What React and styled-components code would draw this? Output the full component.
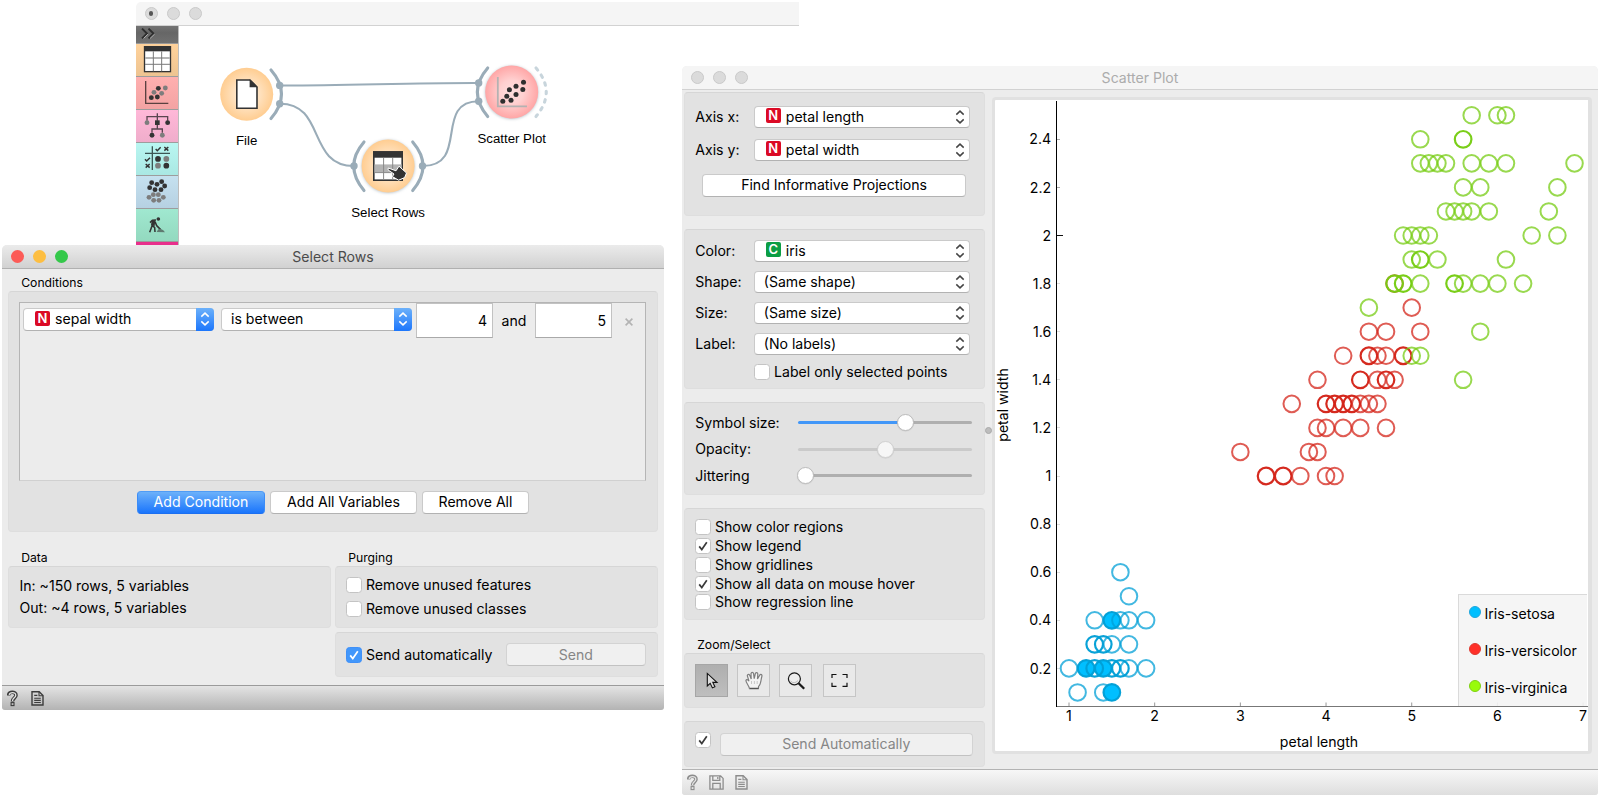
import React from "react";
import styled, { createGlobalStyle, css } from "styled-components";

const GlobalStyle = createGlobalStyle`
  *, *::before, *::after { box-sizing: border-box; }
  body {
    margin: 0;
    background: #fff;
    overflow: hidden;
    font-family: Inter, "Liberation Sans", sans-serif;
    font-size: 14.08px;
    line-height: 18px;
    color: #000;
  }
  svg { display: block; }
`;

const Desktop = styled.div`
  position: relative;
  width: 1600px;
  height: 797px;
  overflow: hidden;
`;

/* ---------- windows ---------- */

const Window = styled.section`
  position: absolute;
  display: flex;
  flex-direction: column;
  overflow: hidden;
  background: #ececec;
`;

const CanvasWindow = styled(Window)`
  left: 136px;
  top: 2px;
  width: 663px;
  height: 243px;
  background: #fff;
  border-radius: 5px 0 0 0;
`;

const SelectRowsWindow = styled(Window)`
  left: 2px;
  top: 245px;
  width: 662px;
  height: 465px;
  border-radius: 5px 5px 3px 3px;
`;

const ScatterWindow = styled(Window)`
  left: 682px;
  top: 66px;
  width: 916px;
  height: 729px;
  border-radius: 5px 5px 3px 3px;
`;

const TitleBar = styled.header`
  flex: none;
  display: grid;
  grid-template-columns: 1fr auto 1fr;
  align-items: center;
  height: 24px;
  padding: 0 8.5px;
  color: ${(p) => (p.$active ? "#4b4b4b" : "#acacac")};
  background: ${(p) => (p.$active ? "linear-gradient(#ebebeb, #d1d1d1)" : "#f5f5f5")};
  border-bottom: 1px solid ${(p) => (p.$active ? "#b0b0b0" : "#d2d2d2")};
`;

const Lights = styled.div`
  display: flex;
  gap: 9px;
`;

const Light = styled.i`
  display: grid;
  place-items: center;
  width: 13.2px;
  height: 13.2px;
  border-radius: 50%;
  background: ${(p) => p.$color || "#dbdbdb"};
  border: ${(p) => (p.$color ? "none" : "1px solid #c9c9c9")};
  &::after {
    content: "";
    width: 4.5px;
    height: 4.5px;
    border-radius: 50%;
    background: ${(p) => (p.$dot ? "#555" : "transparent")};
  }
`;

const Title = styled.h1`
  margin: 0;
  font-size: 14.08px;
  font-weight: 400;
  line-height: 18px;
`;

const StatusBar = styled.footer`
  flex: none;
  display: flex;
  align-items: center;
  gap: ${(p) => (p.$active ? "12.5px" : "11px")};
  height: ${(p) => (p.$active ? "25px" : "26px")};
  padding-left: 5px;
  border-top: 1px solid ${(p) => (p.$active ? "#9b9b9b" : "#b3b3b3")};
  background: ${(p) =>
    p.$active ? "linear-gradient(#e4e4e4, #b3b3b3)" : "linear-gradient(#f7f7f7, #dedede)"};
  color: ${(p) => (p.$active ? "#3c3c3c" : "#8c8c8c")};
`;

/* ---------- shared controls ---------- */

const Panel = styled.div`
  background: #e2e2e2;
  border: 1px solid #dedede;
  border-top-color: #d6d6d6;
  border-radius: 4px;
`;

const GroupTitle = styled.h2`
  display: flex;
  align-items: flex-end;
  margin: 0;
  padding-left: 13.2px;
  font-size: 12.2px;
  font-weight: 400;
  line-height: 16px;
`;

const controlFrame = css`
  background: #fff;
  border: 1px solid #cacaca;
  border-bottom-color: #b2b2b2;
  border-radius: 4px;
`;

const ComboBox = styled.div`
  ${controlFrame}
  display: flex;
  align-items: center;
  width: ${(p) => p.$width}px;
  height: ${(p) => p.$height || 22.5}px;
  padding-left: ${(p) => (p.$tagged ? 11 : 9)}px;
  padding-bottom: 0.5px;
  margin-bottom: ${(p) => (p.$blue ? "2px" : 0)};
  white-space: nowrap;
`;

const Tag = styled.b`
  display: grid;
  place-items: center;
  width: 15px;
  height: 15px;
  margin: -2px 5px 0 0;
  border-radius: 2px;
  background: ${(p) => (p.$kind === "N" ? "#db0a25" : "#0b9d44")};
  color: #fff;
  font-size: 13px;
  font-weight: 600;
  line-height: 15px;
`;

const Stepper = styled.span`
  display: grid;
  place-items: center;
  margin-left: auto;
  margin-right: ${(p) => (p.$blue ? "-1px" : 0)};
  width: 18px;
  height: 22.5px;
  border-radius: 0 4px 4px 0;
  color: ${(p) => (p.$blue ? "#fff" : "#444")};
  background: ${(p) => (p.$blue ? "linear-gradient(#6cb1fa, #1c76fc)" : "none")};
`;

const Button = styled.button`
  ${controlFrame}
  width: ${(p) => p.$width}px;
  height: 22.5px;
  padding: 0;
  font: inherit;
  line-height: 20px;
  color: ${(p) => (p.disabled ? "#868686" : "#000")};
  ${(p) =>
    p.$primary &&
    css`
      color: #fff;
      border-color: #4f9cf6 #3b8cf7 #1c6ff0;
      background: linear-gradient(#6cb1fa, #1a75fc);
    `}
  ${(p) =>
    p.disabled &&
    css`
      background: #f0f0f0;
      border-color: #d3d3d3 #d3d3d3 #c2c2c2;
    `}
`;

const CheckRow = styled.label`
  display: flex;
  align-items: center;
  gap: 4px;
  height: ${(p) => p.$height}px;
  white-space: nowrap;
`;

const Box = styled.span`
  flex: none;
  width: 16px;
  height: 16px;
  border-radius: 3.5px;
  border: 1px solid ${(p) => (p.$blue ? "#3f90f8" : "#c4c4c4")};
  background: ${(p) => (p.$blue ? "#4297fb" : "#fff")};
  color: ${(p) => (p.$blue ? "#fff" : "#3a3a3a")};
`;

function CheckBox({ checked, blue }) {
  return (
    <Box $blue={blue}>
      {checked && (
        <svg width="14" height="14" viewBox="0 0 14 14" fill="none" stroke="currentColor" strokeWidth="1.7">
          <path d="M3.2 7.4 L5.8 10.6 L10.8 3.2" />
        </svg>
      )}
    </Box>
  );
}

function Combo({ width, height, tag, blue, children }) {
  return (
    <ComboBox $width={width} $height={height} $tagged={!!tag} $blue={blue}>
      {tag && <Tag $kind={tag}>{tag}</Tag>}
      {children}
      <Stepper $blue={blue}>
        <svg width="10" height="14" viewBox="0 0 10 14" fill="none" stroke="currentColor" strokeWidth="1.5">
          <path d="M1.3 4.6 L5 1.1 L8.7 4.6 M1.3 9.4 L5 12.9 L8.7 9.4" />
        </svg>
      </Stepper>
    </ComboBox>
  );
}

/* ---------- status icons ---------- */

const HelpIcon = () => (
  <svg width="11" height="17" viewBox="0 0 11 17" fill="none">
    <path d="M1.6 5.4 C1.6 1.2 9 1.2 9 5.2 C9 8 5.5 8 5.5 11.6" stroke="currentColor" strokeWidth="3.6" />
    <path d="M2.2 4.9 C2.6 2 8.8 1.6 8.8 5.2 C8.8 7.8 5.5 7.8 5.5 11" stroke="#e2e2e2" strokeWidth="1.3" />
    <rect x="4.1" y="12.6" width="2.9" height="3" stroke="currentColor" strokeWidth="1.1" />
  </svg>
);

const ReportIcon = () => (
  <svg width="13" height="15" viewBox="0 0 13 15" fill="none" stroke="currentColor">
    <path d="M1 .8 H8.2 L12 4.6 V14 H1 Z" strokeWidth="1.4" />
    <path d="M8 1 V4.8 H12 M3.2 4.4 H6.4 M3.2 7.3 H9.8 M3.2 9.4 H9.8 M3.2 11.5 H9.8" strokeWidth="1.1" />
  </svg>
);

const SaveIcon = () => (
  <svg width="15" height="15" viewBox="0 0 15 15" fill="none" stroke="currentColor" strokeWidth="1.3">
    <path d="M.9 .9 H11.6 L14.1 3.4 V14.1 H.9 Z M3.8 .9 V5.4 H10.8 V.9 M3.8 14 V8.4 H11.2 V14 M8.8 2 V4" />
  </svg>
);

/* ---------- canvas window ---------- */

const CanvasBody = styled.div`
  display: flex;
  flex: 1;
`;

const ToolBox = styled.nav`
  display: flex;
  flex-direction: column;
  width: 43px;
  margin-right: 1px;
  border-right: 1px solid #bdbdbd;
`;

const ToolBoxToggle = styled.div`
  height: 18px;
  padding: 2px 0 0 4.5px;
  background: linear-gradient(#737373, #666 40%, #707070);
  border-bottom: 1px solid #999;
`;

const Category = styled.div`
  height: 33px;
  border-bottom: 1px solid #9d9d9d;
  background: ${(p) => `linear-gradient(${p.$from}, ${p.$to})`};
`;

const CategoryEdge = styled.div`
  height: 3px;
  background: #e8308c;
`;

const K = "#333";
const G = "#7d7d7d";
const Dots = ({ list, r = 7.3, fill }) =>
  list.map(([x, y]) => <circle key={`${x}-${y}`} cx={x} cy={y} r={r} fill={fill} />);

const categories = [
  {
    from: "#ffd29b",
    to: "#eec491",
    icon: (
      <>
        <rect x="25.5" y="8" width="78" height="75" fill="#fff" stroke={K} strokeWidth="4" />
        <rect x="24" y="6" width="81" height="16" fill={K} />
        <path d="M27 42 H102" stroke="#b5b5b5" strokeWidth="6" />
        <path d="M27 61 H102 M52 22 V82 M77 22 V82" stroke="#777" strokeWidth="3" />
      </>
    ),
  },
  {
    from: "#ffb0b0",
    to: "#f3a3a3",
    icon: (
      <>
        <path d="M29 12 V79 H97" fill="none" stroke="#5a4140" strokeWidth="4" />
        <Dots fill={K} list={[[46, 62], [64, 60], [67, 34]]} />
        <Dots fill={G} list={[[54, 46], [77, 49], [88, 33]]} />
      </>
    ),
  },
  {
    from: "#ffb8d8",
    to: "#f0adcb",
    icon: (
      <>
        <path d="M33 32 V20 H95 V32 M64 10 V32 M48 68 V57 H79 V68 M64 44 V57" fill="none" stroke="#5a4550" strokeWidth="4" />
        <rect x="57" y="31" width="14" height="14" fill={K} />
        <Dots fill={K} list={[[95, 38], [48, 76]]} />
        <Dots fill={G} list={[[33, 38], [79, 76]]} />
      </>
    ),
  },
  {
    from: "#b9f6f1",
    to: "#a9e8e3",
    icon: (
      <>
        <path d="M49 10 V81 M27 31 H102" stroke="#3c5654" strokeWidth="4" />
        <path
          d="M59 18 L64 23 L74 13 M27 49 L32 54 L42 44 M85 12 L97 23 M97 12 L85 23 M29 63 L41 74 M41 63 L29 74"
          fill="none"
          stroke={K}
          strokeWidth="4.4"
        />
        <Dots r={8.6} fill={K} list={[[66, 48], [91, 68]]} />
        <Dots r={8.6} fill={G} list={[[91, 48], [66, 68]]} />
      </>
    ),
  },
  {
    from: "#c5e1ef",
    to: "#b6d1e2",
    icon: (
      <>
        <Dots fill={G} list={[[52, 56], [67, 56], [39, 64], [82, 64], [53, 73], [69, 73]]} />
        <Dots fill={K} list={[[47, 20], [63, 25], [77, 17], [86, 30], [41, 35], [57, 41], [75, 41]]} />
      </>
    ),
  },
  {
    from: "#a0e8d0",
    to: "#93d9bf",
    icon: (
      <g transform="translate(0 -4)">
        <circle cx="67" cy="34" r="5.5" fill={K} />
        <path
          d="M60 37 L49 38 L42 45 M52 40 L49 53 L56 60 L57 73 M49 53 L45 63 L41 74 M57 42 L62 54 L74 66"
          fill="none"
          stroke={K}
          strokeWidth="4.6"
          strokeLinejoin="round"
        />
        <path d="M58 38 L47 39 L45 53 L56 55 Z" fill={K} />
        <path d="M62 73 Q67 60 75 64 Q83 66 87 74 Z" fill="#5f7a70" />
      </g>
    ),
  },
];

const nodes = [
  { x: 246.7, y: 94.3, label: "File", ly: 144.7, fill: "url(#orange)" },
  { x: 388.1, y: 166, label: "Select Rows", ly: 216.6, fill: "url(#orange)", shadow: true },
  { x: 511.7, y: 92, label: "Scatter Plot", ly: 142.7, fill: "url(#red)", shadow: true },
];

function Workflow() {
  return (
    <svg width="619" height="219" viewBox="180 26 619 219" fill="none">
      <defs>
        <radialGradient id="orange">
          <stop offset="0" stopColor="#fff0de" />
          <stop offset=".45" stopColor="#ffe3c2" />
          <stop offset="1" stopColor="#ffcd91" />
        </radialGradient>
        <radialGradient id="red">
          <stop offset="0" stopColor="#ffdede" />
          <stop offset=".45" stopColor="#ffd0d0" />
          <stop offset="1" stopColor="#ffa6a6" />
        </radialGradient>
        <filter id="soft" x="-30%" y="-30%" width="160%" height="160%">
          <feGaussianBlur stdDeviation="1.8" />
        </filter>
      </defs>
      {nodes.map((n) => (
        <g key={n.label}>
          {n.shadow && <circle cx={n.x} cy={n.y + 0.5} r="26.6" fill="#b9c3ca" filter="url(#soft)" />}
          <circle cx={n.x} cy={n.y} r="26.5" fill={n.fill} />
          <text
            x={n.x}
            y={n.ly}
            textAnchor="middle"
            fill="#000"
            fontFamily="'Liberation Sans', Arial, sans-serif"
            fontSize="13.25"
          >
            {n.label}
          </text>
        </g>
      ))}
      <g stroke="#9aacb8" strokeWidth="2.1">
        <path d="M280 85.5 C345 85.7 410 82.8 479 83" />
        <path d="M280 103.7 C326 103.7 307 166 354 166" />
        <path d="M422.5 166 C470 166 433 101.3 479 101.3" />
      </g>
      <g stroke="#9aacb8" strokeWidth="3.1" strokeLinecap="round">
        <path d="M271 70 Q292 94 271 118.6" />
        <path d="M487.7 68 Q467 92 487.7 116.5" />
        <path d="M364 142 Q343.5 166 364 190.5" />
        <path d="M412.7 142 Q433.3 166 412.7 190.5" />
        <path d="M536 68 Q556.5 92 536 116.5" stroke="#c8d5dc" strokeDasharray="2.6 6" />
      </g>
      <g fill="#9aacb8">
        <circle cx="279.7" cy="85.4" r="3.7" />
        <circle cx="279.7" cy="103.7" r="3.7" />
        <circle cx="478.7" cy="83" r="3.7" />
        <circle cx="478.7" cy="101.3" r="3.7" />
        <circle cx="354" cy="166" r="3.7" />
        <circle cx="422.5" cy="166" r="3.7" />
      </g>
      <path d="M236.8 80 H250 L257 87 V108.3 H236.8 Z" fill="#fff" stroke="#333" strokeWidth="1.6" />
      <path d="M249.6 79.3 L257.6 87.3 H249.6 Z" fill="#333" />
      <path d="M497.8 77 V106.3 H527" stroke="#b4b2b2" strokeWidth="1.8" />
      <Dots
        fill="#2f2f2f"
        r={2.5}
        list={[[502.8, 101.3], [511, 100.3], [506.8, 96.3], [516, 94.5], [509.4, 89.7], [516, 86.3], [522.8, 89.5], [523.5, 82.2]]}
      />
      <rect x="373.8" y="152" width="28.4" height="28.2" fill="#fff" stroke="#333" strokeWidth="1.6" />
      <rect x="373" y="151.2" width="30" height="6.5" fill="#333" />
      <rect x="374.6" y="164.4" width="27" height="7.8" fill="#b3b3b3" />
      <path d="M383.6 158 V180 M392.7 158 V180 M374 172.6 H402" stroke="#888" strokeWidth="1" />
      <path
        d="M388.3 168 L396 170.8 L399 166.2 L406.5 173 L404.6 177.6 L398.6 180.2 L392.4 176.6 L394 174 L388 169.9 Z"
        fill="#333"
        stroke="#fff"
        strokeWidth="1"
      />
    </svg>
  );
}

function OrangeCanvas() {
  return (
    <CanvasWindow>
      <TitleBar>
        <Lights>
          <Light $dot />
          <Light />
          <Light />
        </Lights>
      </TitleBar>
      <CanvasBody>
        <ToolBox>
          <ToolBoxToggle>
            <svg width="15" height="11" viewBox="0 0 15 11" fill="none" stroke="#2e2e2e" strokeWidth="1.9">
              <path d="M1 .6 L6 5.5 L1 10.4" />
              <path d="M7.5 .6 L12.5 5.5 L7.5 10.4" />
              <path d="M2.6 10.4 L7.2 6 M9.1 10.4 L13.7 6" stroke="#b5b5b5" strokeWidth="1" />
            </svg>
          </ToolBoxToggle>
          {categories.map((c) => (
            <Category key={c.from} $from={c.from} $to={c.to}>
              <svg width="42" height="32.3" viewBox="0 0 126 97">
                {c.icon}
              </svg>
            </Category>
          ))}
          <CategoryEdge />
        </ToolBox>
        <Workflow />
      </CanvasBody>
    </CanvasWindow>
  );
}

/* ---------- select rows window ---------- */

const SelectRowsBody = styled.div`
  flex: 1;
  padding: 0 6px;
`;

const ConditionsTitle = styled(GroupTitle)`
  height: 22px;
`;

const LowerTitle = styled(GroupTitle)`
  height: 34px;
`;

const ConditionsPanel = styled(Panel)`
  height: 241px;
  padding: 10px 11px 10px 10px;
`;

const ConditionList = styled.div`
  height: 179px;
  background: #ececec;
  border: 1px solid #b5b5b5;
  border-bottom-color: #d0d0d0;
`;

const ConditionRow = styled.div`
  display: flex;
  align-items: center;
  height: 35px;
  padding-left: 3px;
`;

const Gap = styled.span`
  width: ${(p) => p.$size}px;
`;

const NumberField = styled.div`
  width: 77px;
  height: 35px;
  padding: 8px 5px 0 0;
  text-align: right;
  line-height: 18px;
  background: #fff;
  border: 1px solid #c2c2c2;
  border-bottom-color: #a9a9a9;
`;

const Conjunction = styled.span`
  width: 42px;
  padding-top: 1px;
  text-align: center;
`;

const RemoveMark = styled.svg`
  margin: 3px 0 0 12.5px;
`;

const ConditionButtons = styled.div`
  display: flex;
  gap: 5.3px;
  padding: 10px 0 0 118px;
`;

const LowerColumns = styled.div`
  display: grid;
  grid-template-columns: 323px 323px;
  gap: 4px;
`;

const DataPanel = styled(Panel)`
  height: 62px;
  padding: 8px 0 0 10.5px;
  line-height: 22px;
`;

const PurgePanel = styled(Panel)`
  height: 62px;
  padding: 6px 0 0 10px;
`;

const SendPanel = styled(Panel)`
  display: flex;
  align-items: center;
  justify-content: space-between;
  height: 45px;
  margin-top: 4px;
  padding: 0 11px 0 10px;
`;

function SelectRows() {
  return (
    <SelectRowsWindow>
      <TitleBar $active>
        <Lights>
          <Light $color="#fc5b57" />
          <Light $color="#fdbe41" />
          <Light $color="#34c84a" />
        </Lights>
        <Title>Select Rows</Title>
      </TitleBar>
      <SelectRowsBody>
        <ConditionsTitle>Conditions</ConditionsTitle>
        <ConditionsPanel>
          <ConditionList>
            <ConditionRow>
              <Combo width={191} tag="N" blue>
                sepal width
              </Combo>
              <Gap $size={7} />
              <Combo width={191} blue>
                is between
              </Combo>
              <Gap $size={4} />
              <NumberField>4</NumberField>
              <Conjunction>and</Conjunction>
              <NumberField>5</NumberField>
              <RemoveMark width="8" height="8" viewBox="0 0 8 8" stroke="#b3b3b3" strokeWidth="1.6">
                <path d="M.6 .6 L7.4 7.4 M7.4 .6 L.6 7.4" />
              </RemoveMark>
            </ConditionRow>
          </ConditionList>
          <ConditionButtons>
            <Button $width={128} $primary>
              Add Condition
            </Button>
            <Button $width={146.4}>Add All Variables</Button>
            <Button $width={107}>Remove All</Button>
          </ConditionButtons>
        </ConditionsPanel>
        <LowerColumns>
          <div>
            <LowerTitle>Data</LowerTitle>
            <DataPanel>
              <div>In: ~150 rows, 5 variables</div>
              <div>Out: ~4 rows, 5 variables</div>
            </DataPanel>
          </div>
          <div>
            <LowerTitle>Purging</LowerTitle>
            <PurgePanel>
              <CheckRow $height={24.3}>
                <CheckBox />
                Remove unused features
              </CheckRow>
              <CheckRow $height={24.3}>
                <CheckBox />
                Remove unused classes
              </CheckRow>
            </PurgePanel>
            <SendPanel>
              <CheckRow $height={24}>
                <CheckBox checked blue />
                Send automatically
              </CheckRow>
              <Button $width={140.5} disabled>
                Send
              </Button>
            </SendPanel>
          </div>
        </LowerColumns>
      </SelectRowsBody>
      <StatusBar $active>
        <HelpIcon />
        <ReportIcon />
      </StatusBar>
    </SelectRowsWindow>
  );
}

/* ---------- scatter plot window ---------- */

const ScatterBody = styled.div`
  flex: 1;
  display: flex;
  padding: 2px 6px 0 2px;
`;

const Controls = styled.aside`
  width: 300.5px;
`;

const AxisPanel = styled(Panel)`
  display: flex;
  flex-direction: column;
  gap: 10.5px;
  height: 123.5px;
  padding: 12.5px 0 0 10.3px;
`;

const ProjectionButton = styled(Button)`
  margin: 2.7px 0 0 6.5px;
`;

const StylePanel = styled(Panel)`
  display: flex;
  flex-direction: column;
  gap: 9px;
  height: 159.5px;
  margin-top: 13.5px;
  padding: 10px 0 0 10.3px;
`;

const Field = styled.div`
  display: grid;
  grid-template-columns: 58.5px 1fr;
  align-items: center;
`;

const LabelOnly = styled.div`
  margin: -2.5px 0 0 58.8px;
`;

const SliderPanel = styled(Panel)`
  height: 93px;
  margin-top: 13.5px;
  padding: 6.5px 0 0 10.3px;
`;

const SliderRow = styled.div`
  display: grid;
  grid-template-columns: 102.5px 174px;
  align-items: center;
  height: 26.5px;
`;

const Track = styled.div`
  height: 3px;
  border-radius: 2px;
  background: ${(p) => {
    const rest = p.$faded ? "#cacaca" : "#afafaf";
    return p.$filled
      ? `linear-gradient(to right, #4297f8 ${p.$at}px, ${rest} ${p.$at}px)`
      : rest;
  }};
`;

const Knob = styled.div`
  width: 17px;
  height: 17px;
  margin: -7px 0 0 ${(p) => p.$at - 8.7}px;
  border-radius: 50%;
  background: ${(p) => (p.$faded ? "#f6f6f6" : "#fff")};
  border: 1px solid ${(p) => (p.$faded ? "#d2d2d2" : "#bcbcbc")};
  box-shadow: 0 0.5px 1px rgba(0, 0, 0, 0.12);
`;

const OptionsPanel = styled(Panel)`
  height: 112px;
  margin-top: 13px;
  padding: 9px 0 0 10px;
`;

const ZoomTitle = styled(GroupTitle)`
  height: 33px;
`;

const ZoomPanel = styled(Panel)`
  display: flex;
  gap: 9px;
  height: 55px;
  padding: 10px 0 0 10px;
`;

const ToolButton = styled.div`
  display: grid;
  place-items: center;
  width: 33px;
  height: 33px;
  margin-left: ${(p) => (p.$apart ? "2px" : 0)};
  border: 1px solid ${(p) => (p.$pressed ? "#a6a6a6" : "#c5c5c5")};
  background: ${(p) => (p.$pressed ? "linear-gradient(#afafaf, #bebebe)" : "#e9e9e9")};
`;

const AutoPanel = styled(Panel)`
  display: flex;
  gap: 9px;
  height: 45.5px;
  margin-top: 13px;
  padding: 10px 0 0 10px;
`;

const AutoButton = styled(Button)`
  margin-top: 1px;
`;

const Splitter = styled.div`
  display: flex;
  align-items: center;
  justify-content: center;
  width: 7.5px;
  height: 676px;
  &::after {
    content: "";
    width: 7px;
    height: 7px;
    border-radius: 50%;
    background: #bdbdbd;
    border: 1px solid #a9a9a9;
  }
`;

const PlotFrame = styled.main`
  position: relative;
  flex: 1;
  height: 657px;
  margin-top: 5px;
  border: solid #e1e1e1;
  border-width: 3px 4px 3px 3px;
  border-radius: 4px;
  background: #fff;
`;

const Legend = styled.ul`
  position: absolute;
  right: 1px;
  bottom: 45px;
  display: flex;
  flex-direction: column;
  width: 129px;
  height: 112px;
  margin: 0;
  padding: 0 0 0 9.5px;
  list-style: none;
  background: rgba(244, 244, 244, 0.9);
  border-left: 1px solid #dadada;
  border-top: 1px solid #dadada;
`;

const LegendItem = styled.li`
  display: flex;
  align-items: center;
  gap: 4px;
  height: 37.4px;
`;

const Swatch = styled.i`
  width: 12px;
  height: 12px;
  margin-top: -4px;
  border-radius: 50%;
  background: ${(p) => p.$fill};
  border: 1px solid ${(p) => p.$edge};
`;

/* Petal width -> list of [petal length, number of samples, selected] */
const series = [
  {
    name: "Iris-setosa",
    stroke: "#009fd6",
    fill: "#00bfff",
    edge: "#20a6dc",
    rows: {
      0.6: [[1.6, 1]],
      0.5: [[1.7, 1]],
      0.4: [[1.3, 1], [1.5, 3, true], [1.6, 1], [1.7, 1], [1.9, 1]],
      0.3: [[1.3, 2], [1.4, 3], [1.5, 1], [1.7, 1]],
      0.2: [[1.0, 1], [1.5, 7], [1.2, 2, true], [1.4, 8, true], [1.3, 4], [1.6, 3], [1.7, 1], [1.9, 1]],
      0.1: [[1.1, 1], [1.4, 1], [1.5, 3, true]],
    },
  },
  {
    name: "Iris-versicolor",
    stroke: "#d42318",
    fill: "#ff3029",
    edge: "#dd3a30",
    rows: {
      1.8: [[4.8, 1]],
      1.7: [[5.0, 1]],
      1.6: [[4.5, 1], [4.7, 1], [5.1, 1]],
      1.5: [[4.2, 1], [4.5, 4], [4.6, 1], [4.7, 1], [4.9, 2]],
      1.4: [[3.9, 1], [4.4, 2], [4.6, 1], [4.7, 2], [4.8, 1]],
      1.3: [[3.6, 1], [4.0, 4], [4.1, 2], [4.2, 3], [4.3, 2], [4.4, 1], [4.5, 1], [4.6, 1]],
      1.2: [[3.9, 1], [4.0, 1], [4.2, 1], [4.4, 1], [4.7, 1]],
      1.1: [[3.0, 1], [3.8, 1], [3.9, 1]],
      "1.0": [[3.3, 2], [3.5, 2], [3.7, 1], [4.0, 1], [4.1, 1]],
    },
  },
  {
    name: "Iris-virginica",
    stroke: "#76cc12",
    fill: "#99fb0a",
    edge: "#7fd014",
    rows: {
      2.5: [[5.7, 1], [6.0, 1], [6.1, 1]],
      2.4: [[5.1, 1], [5.6, 2]],
      2.3: [[5.1, 1], [5.2, 1], [5.3, 1], [5.4, 1], [5.7, 1], [5.9, 1], [6.1, 1], [6.9, 1]],
      2.2: [[5.6, 1], [5.8, 1], [6.7, 1]],
      2.1: [[5.4, 1], [5.5, 1], [5.6, 1], [5.7, 1], [5.9, 1], [6.6, 1]],
      "2.0": [[4.9, 1], [5.0, 1], [5.1, 1], [5.2, 1], [6.4, 1], [6.7, 1]],
      1.9: [[5.0, 1], [5.1, 2], [5.3, 1], [6.1, 1]],
      1.8: [[4.8, 2], [4.9, 3], [5.1, 1], [5.5, 2], [5.6, 1], [5.8, 1], [6.0, 1], [6.3, 1]],
      1.7: [[4.5, 1]],
      1.6: [[5.8, 1]],
      1.5: [[5.0, 1], [5.1, 1]],
      1.4: [[5.6, 1]],
    },
  },
];

const px = (v) => 74 + (v - 1) * 85.68;
const py = (v) => 568.4 - (v - 0.2) * 240.5;
const yTicks = [0.2, 0.4, 0.6, 0.8, 1, 1.2, 1.4, 1.6, 1.8, 2, 2.2, 2.4];
const xTicks = [1, 2, 3, 4, 5, 6, 7];
const tickColor = { 2: "#111", 2.2: "#aaa", 2.4: "#aaa" };

function Chart() {
  return (
    <svg width="593" height="651" viewBox="0 0 593 651" fontFamily="Inter, sans-serif" fontSize="14.2">
      <path d="M61 606.5 H593" stroke="#777" />
      <path d="M61.5 1 V607" stroke="#000" />
      {yTicks.map((t) => (
        <g key={t}>
          <path
            d={`M62 ${Math.floor(py(t)) + 0.5} h${t === 2 ? 6 : 3}`}
            stroke={tickColor[t] || "#ddd"}
          />
          <text x="56.2" y={py(t) + 5.1} textAnchor="end">
            {t}
          </text>
        </g>
      ))}
      {xTicks.map((t) => (
        <g key={t}>
          <path d={`M${px(t)} 606 v-3.5`} stroke="#999" />
          <text x={px(t)} y="621" textAnchor="middle">
            {t}
          </text>
        </g>
      ))}
      <text x="324" y="647" textAnchor="middle" fontSize="14.08">
        petal length
      </text>
      <text transform="translate(13.4 305) rotate(-90)" textAnchor="middle" fontSize="14.08">
        petal width
      </text>
      {series.map((s) =>
        Object.entries(s.rows).map(([w, points]) =>
          points.map(([len, count, selected]) => (
            <circle
              key={`${w}/${len}`}
              cx={px(len)}
              cy={py(Number(w))}
              r="8.3"
              fill={selected ? s.fill : "none"}
              stroke={s.stroke}
              strokeWidth={count > 1 ? 2.2 : 2}
              strokeOpacity={count > 1 ? 0.97 : 0.74}
            />
          ))
        )
      )}
    </svg>
  );
}

const ArrowIcon = () => (
  <svg width="31" height="31" viewBox="1 1 31 31">
    <path
      d="M12.3 9.4 V22 L15.2 19.3 L17.4 23.9 L19.9 22.8 L17.8 18.4 H22 Z"
      fill="#dcdcdc"
      stroke="#111"
      strokeWidth="1.1"
    />
  </svg>
);

const HandIcon = () => (
  <svg width="31" height="31" viewBox="1 1 31 31">
    <path
      d="M12.5 24.6 C12 21.5 8.8 18.6 8.9 16.4 C9.6 14.8 11.2 16 12 17.2 L10.3 11.6 C10.6 9.8 12.2 10 12.8 11.4 L14.2 15 L14 9.6 C14.4 8 16.2 8 16.6 9.6 L17.2 14.6 L18.4 9.4 C19 8 20.8 8.4 20.8 9.9 L20.5 15 L22.8 11 C23.8 9.8 25.4 10.8 24.9 12.2 C23.6 16 24.4 20 21.6 22.4 L21.4 24.6 Z"
      fill="#f4f4f4"
      stroke="#7e7e7e"
      strokeWidth="1.2"
    />
    <path d="M14.5 17 V20 M17.4 17 V20 M20.2 17 V20" stroke="#c9c9c9" />
    <path d="M13 24.4 H21.4" stroke="#555" strokeWidth="1.3" />
  </svg>
);

const ZoomIcon = () => (
  <svg width="31" height="31" viewBox="1 1 31 31" fill="none" stroke="#1a1a1a">
    <circle cx="15.4" cy="14.8" r="6" fill="#eee" strokeWidth="1.2" />
    <path d="M11.6 17 Q15 20.6 19 16.6" stroke="#bbb" />
    <path d="M19.6 19.2 L25.2 24.8" strokeWidth="2.3" />
  </svg>
);

const FitIcon = () => (
  <svg width="31" height="31" viewBox="1 1 31 31" fill="none" stroke="#111" strokeWidth="1.2">
    <path d="M9 14 V10.5 H13.5 M19.5 10.5 H24 V14 M24 18.8 V22.3 H19.5 M13.5 22.3 H9 V18.8" />
  </svg>
);

function Slider({ label, at, filled, faded }) {
  return (
    <SliderRow>
      {label}
      <Track $at={at} $filled={filled} $faded={faded}>
        <Knob $at={at} $faded={faded} />
      </Track>
    </SliderRow>
  );
}

const options = [
  ["Show color regions", false],
  ["Show legend", true],
  ["Show gridlines", false],
  ["Show all data on mouse hover", true],
  ["Show regression line", false],
];

function ScatterPlot() {
  return (
    <ScatterWindow>
      <TitleBar>
        <Lights>
          <Light />
          <Light />
          <Light />
        </Lights>
        <Title>Scatter Plot</Title>
      </TitleBar>
      <ScatterBody>
        <Controls>
          <AxisPanel>
            <Field>
              Axis x:
              <Combo width={216} tag="N">
                petal length
              </Combo>
            </Field>
            <Field>
              Axis y:
              <Combo width={216} tag="N">
                petal width
              </Combo>
            </Field>
            <ProjectionButton $width={264.6}>Find Informative Projections</ProjectionButton>
          </AxisPanel>
          <StylePanel>
            <Field>
              Color:
              <Combo width={216.7} height={22} tag="C">
                iris
              </Combo>
            </Field>
            <Field>
              Shape:
              <Combo width={216.7} height={22}>
                (Same shape)
              </Combo>
            </Field>
            <Field>
              Size:
              <Combo width={216.7} height={22}>
                (Same size)
              </Combo>
            </Field>
            <Field>
              Label:
              <Combo width={216.7} height={22}>
                (No labels)
              </Combo>
            </Field>
            <LabelOnly>
              <CheckRow $height={20}>
                <CheckBox />
                Label only selected points
              </CheckRow>
            </LabelOnly>
          </StylePanel>
          <SliderPanel>
            <Slider label="Symbol size:" at={108} filled />
            <Slider label="Opacity:" at={87.5} faded />
            <Slider label="Jittering" at={8} />
          </SliderPanel>
          <OptionsPanel>
            {options.map(([text, on]) => (
              <CheckRow key={text} $height={18.75}>
                <CheckBox checked={on} />
                {text}
              </CheckRow>
            ))}
          </OptionsPanel>
          <ZoomTitle>Zoom/Select</ZoomTitle>
          <ZoomPanel>
            <ToolButton $pressed>
              <ArrowIcon />
            </ToolButton>
            <ToolButton>
              <HandIcon />
            </ToolButton>
            <ToolButton>
              <ZoomIcon />
            </ToolButton>
            <ToolButton $apart>
              <FitIcon />
            </ToolButton>
          </ZoomPanel>
          <AutoPanel>
            <CheckBox checked />
            <AutoButton $width={252.5} disabled>
              Send Automatically
            </AutoButton>
          </AutoPanel>
        </Controls>
        <Splitter />
        <PlotFrame>
          <Chart />
          <Legend>
            {series.map((s) => (
              <LegendItem key={s.name}>
                <Swatch $fill={s.fill} $edge={s.edge} />
                {s.name}
              </LegendItem>
            ))}
          </Legend>
        </PlotFrame>
      </ScatterBody>
      <StatusBar>
        <HelpIcon />
        <SaveIcon />
        <ReportIcon />
      </StatusBar>
    </ScatterWindow>
  );
}

export default function App() {
  return (
    <>
      <GlobalStyle />
      <Desktop>
        <OrangeCanvas />
        <SelectRows />
        <ScatterPlot />
      </Desktop>
    </>
  );
}
